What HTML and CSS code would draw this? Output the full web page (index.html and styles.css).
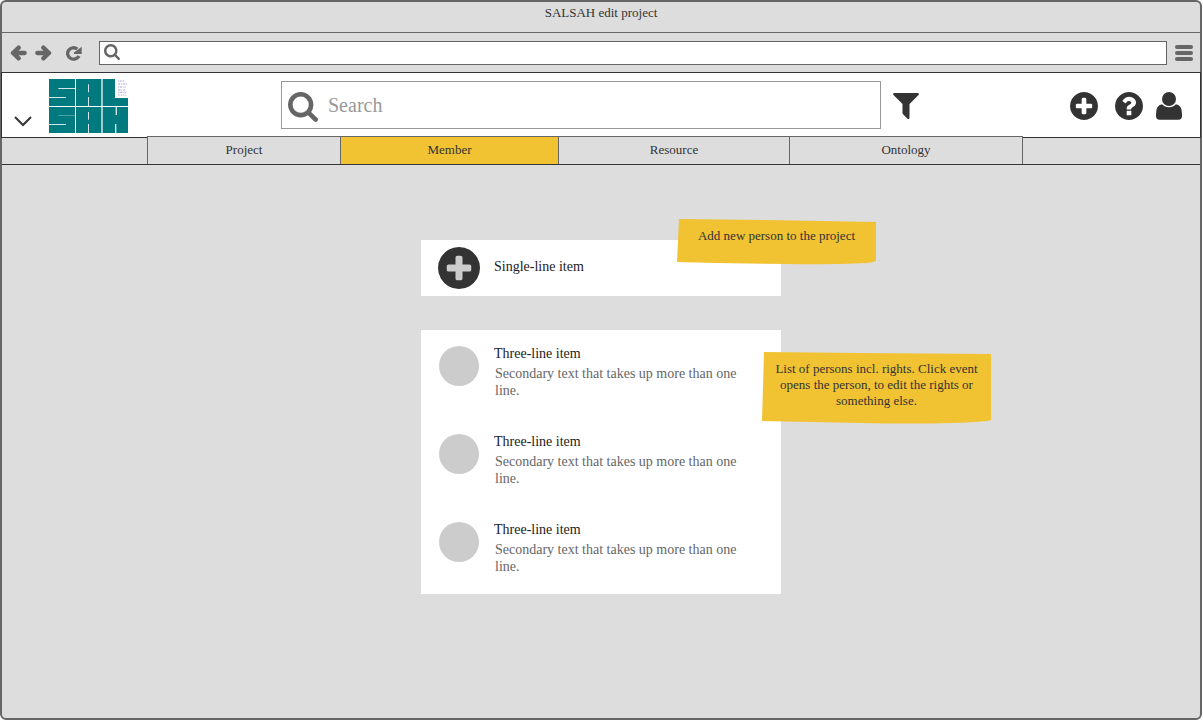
FILE: index.html
```html
<!DOCTYPE html>
<html lang="en">
<head>
<meta charset="utf-8">
<meta name="viewport" content="width=device-width, initial-scale=1">
<title>SALSAH edit project</title>
<link rel="stylesheet" href="styles.css">
</head>
<body>
<svg class="symbols" aria-hidden="true">
  <symbol id="search" viewBox="64 128 1664 1664"><path d="M1216 832q0-185-131.500-316.500t-316.500-131.500-316.500 131.500-131.500 316.500 131.500 316.500 316.500 131.500 316.500-131.500 131.500-316.500zm512 832q0 52-38 90t-90 38q-54 0-90-38l-343-342q-179 124-399 124-143 0-273.500-55.500t-225-150-150-225-55.500-273.500 55.500-273.500 150-225 225-150 273.500-55.500 273.500 55.500 225 150 150 225 55.500 273.500q0 220-124 399l343 343q37 37 37 90z"/></symbol>
  <symbol id="plus" viewBox="128 128 1536 1536"><path d="M1344 960v-128q0-26-19-45t-45-19h-256v-256q0-26-19-45t-45-19h-128q-26 0-45 19t-19 45v256h-256q-26 0-45 19t-19 45v128q0 26 19 45t45 19h256v256q0 26 19 45t45 19h128q26 0 45-19t19-45v-256h256q26 0 45-19t19-45zm320-64q0 209-103 385.500t-279.500 279.500-385.500 103-385.500-103-279.500-279.500-103-385.500 103-385.500 279.500-279.500 385.500-103 385.500 103 279.500 279.500 103 385.500z"/></symbol>
</svg>
<div class="window">
  <div class="titlebar">SALSAH edit project</div>
  <div class="toolbar">
    <button class="tool" aria-label="Back"><svg width="17" height="16" viewBox="0 0 51 48"><path class="thick" d="M26 8 9 24l17 16M9 24h35"/></svg></button>
    <button class="tool" aria-label="Forward"><svg width="17" height="16" viewBox="0 0 51 48"><path class="thick" d="m25 8 17 16-17 16M42 24H7"/></svg></button>
    <button class="tool reload" aria-label="Reload"><svg width="17" height="16" viewBox="0 0 51 48"><path class="ring" d="M42 33A18 17 0 1 1 37 12"/><path d="M50 5v22H27l-1-4z"/></svg></button>
    <label class="address">
      <svg width="16" height="16"><use href="#search"/></svg>
      <input type="text" aria-label="Address">
    </label>
    <button class="tool menu" aria-label="Menu"><svg width="18" height="16"><rect width="18" height="4" rx="2"/><rect y="6" width="18" height="4" rx="2"/><rect y="12" width="18" height="4" rx="2"/></svg></button>
  </div>

  <header class="header">
    <button class="icon expand" aria-label="Show more"><svg width="18" height="11" viewBox="0 0 18 11"><path class="chevron" d="m1 1 8 8 8-8"/></svg></button>
    <a class="logo" href="#" aria-label="SALSAH">
      <svg width="79" height="54" viewBox="0 0 237 162">
        <path fill="#007a7f" d="M0 0h78v81H0zM81 0h75v81H81zM162 0h36v57h39v24h-75zM0 84h78v78H0zM81 84h75v78H81zM162 84h75v78h-75z"/>
        <path fill="#a3cacc" d="M156 0h6v81h-6zM156 84h6v78h-6z"/>
        <path fill="#d3e7e8" d="M28 27h50v3H28zM0 54h51v3H0zM117 16h3v24h-3zM117 54h3v27h-3zM0 135h51v3H0zM117 99h3v23h-3zM117 135h3v27h-3zM201 84h3v24h-3zM198 135h3v27h-3z"/>
        <path fill="#4d9fa2" d="M28 108h50v3H28zM198 84h3v24h-3zM201 135h3v27h-3z"/>
        <g fill="none" stroke="#a9a6d4" stroke-width="3">
          <path stroke-dasharray="3 2 6 3 5 2" d="M207 6h21"/><path stroke-dasharray="6 3 3 2 8 3" d="M207 15h28"/><path stroke-dasharray="4 2 7 3" d="M207 24h24"/><path stroke-dasharray="7 2 3 3" d="M207 33h22"/><path stroke-dasharray="3 2 8 2" d="M207 40h25"/><path stroke-dasharray="5 3 4 2" d="M207 48h24"/>
        </g>
      </svg>
    </a>
    <label class="search">
      <svg width="30" height="30"><use href="#search"/></svg>
      <input type="search" placeholder="Search" aria-label="Search">
    </label>
    <button class="icon" aria-label="Filter"><svg width="26" height="26" viewBox="185 256 1422 1408" preserveAspectRatio="none"><path d="M1595 295q17 41-14 70l-493 493v742q0 42-39 59-13 5-25 5-27 0-45-19l-256-256q-19-19-19-45v-486l-493-493q-31-29-14-70 17-39 59-39h1280q42 0 59 39z"/></svg></button>
    <div class="actions">
      <button class="icon" aria-label="Add"><svg width="28" height="28"><use href="#plus"/></svg></button>
      <button class="icon" aria-label="Help"><svg width="28" height="28" viewBox="128 128 1536 1536"><path d="M1024 1376v-192q0-14-9-23t-23-9h-192q-14 0-23 9t-9 23v192q0 14 9 23t23 9h192q14 0 23-9t9-23zm256-672q0-88-55.500-163t-138.500-116-170-41q-243 0-371 213-15 24 8 42l132 100q7 6 19 6 16 0 25-12 53-68 86-92 34-24 86-24 48 0 85.500 26t37.500 59q0 38-20 61t-68 45q-63 28-115.500 86.500t-52.500 125.500v36q0 14 9 23t23 9h192q14 0 23-9t9-23q0-19 21.500-49.500t54.500-49.500q32-18 49-28.500t46-35 44.500-48 28-60.500 12.500-81zm384 192q0 209-103 385.500t-279.500 279.500-385.500 103-385.500-103-279.500-279.500-103-385.500 103-385.500 279.500-279.500 385.500-103 385.500 103 279.500 279.500 103 385.500z"/></svg></button>
      <button class="icon user" aria-label="Account"><svg width="26" height="28" viewBox="0 0 78 84"><path d="M18 37Q26 46 39 46 52 46 60 37 78 39 78 67V72Q78 83 67 83H11Q0 83 0 72V67Q0 39 18 37z"/><circle cx="39" cy="21" r="21"/></svg></button>
    </div>
  </header>

  <nav class="tabs">
    <span class="filler"></span>
    <a class="tab" href="#">Project</a>
    <a class="tab current" href="#" aria-current="page">Member</a>
    <a class="tab" href="#">Resource</a>
    <a class="tab last" href="#">Ontology</a>
    <span class="filler"></span>
  </nav>

  <main class="content">
    <section class="card">
      <a class="item single" href="#">
        <svg class="add" width="42" height="42"><circle cx="21" cy="21" r="18" fill="#ccc"/><use href="#plus"/></svg>
        <span class="name">Single-line item</span>
      </a>
      <aside class="note note-add">
        <svg viewBox="0 0 200 46" preserveAspectRatio="none"><path d="M3 0 90 1 199 3 199 41Q200 43 190 44 150 46 110 45L40 44 1 43z"/></svg>
        <p>Add new person to the project</p>
      </aside>
    </section>
    <section class="card">
      <ul class="list">
        <li class="item"><span class="avatar"></span><div><h2 class="name">Three-line item</h2><p class="detail">Secondary text that takes up more than one line.</p></div></li>
        <li class="item"><span class="avatar"></span><div><h2 class="name">Three-line item</h2><p class="detail">Secondary text that takes up more than one line.</p></div></li>
        <li class="item"><span class="avatar"></span><div><h2 class="name">Three-line item</h2><p class="detail">Secondary text that takes up more than one line.</p></div></li>
      </ul>
      <aside class="note note-list">
        <svg viewBox="0 0 231 72" preserveAspectRatio="none"><path d="M3 0 100 1 230 2 230 68Q226 70 190 71 150 72 100 71L1 69z"/></svg>
        <p>List of persons incl. rights. Click event opens the person, to edit the rights or something else.</p>
      </aside>
    </section>
  </main>
</div>
</body>
</html>
```
FILE: styles.css
```css
* {
  box-sizing: border-box;
}

body {
  margin: 0;
  padding-right: 1px;
  background: #fff;
  color: #333;
  font: 13px/16px "Liberation Serif", "Times New Roman", serif;
}

a {
  color: inherit;
  text-decoration: none;
}

button {
  display: flex;
  padding: 0;
  border: 0;
  background: none;
}

input {
  flex: 1;
  min-width: 0;
  padding: 0;
  border: 0;
  outline: 0;
  background: none;
  color: #333;
  font: inherit;
}

svg {
  display: block;
  flex: none;
}

h2,
p,
ul {
  margin: 0;
  padding: 0;
}

.symbols {
  position: absolute;
  width: 0;
  height: 0;
}

.window {
  display: flex;
  flex-direction: column;
  min-height: 100vh;
  border: 2px solid #666;
  border-radius: 6px;
  background: #ddd;
}

.titlebar {
  padding: 3px 0 11px;
  border-bottom: 1px solid #666;
  text-align: center;
}

/* Browser toolbar */
.toolbar {
  display: flex;
  align-items: center;
  gap: 8px;
  padding: 8px 7px 7px 8px;
  fill: #666;
}

.thick,
.ring {
  fill: none;
  stroke: #666;
}

.thick {
  stroke-width: 13;
  stroke-linecap: round;
  stroke-linejoin: round;
}

.ring {
  stroke-width: 10;
}

.reload {
  margin-right: 9px;
  margin-left: 5px;
}

.address {
  display: flex;
  flex: 1;
  align-items: center;
  gap: 6px;
  height: 24px;
  padding: 0 4px 2px;
  border: 1px solid #666;
  background: #fff;
}

/* Application header */
.header {
  display: flex;
  align-items: center;
  margin: 0 -1px;
  padding: 6px 18px 4px 12px;
  border: 1px solid #333;
  background: #fff;
  fill: #333;
}

.expand {
  align-self: flex-end;
  margin: 0 17px 6px 0;
}

.chevron {
  fill: none;
  stroke: #333;
  stroke-width: 2;
}

.search {
  display: flex;
  flex: 0 1 600px;
  align-items: center;
  gap: 10px;
  height: 48px;
  margin: 0 12px 2px 153px;
  padding: 0 6px;
  border: 1px solid #999;
  background: #fff;
  font-size: 20px;
  line-height: 24px;
  fill: #666;
}

.search svg {
  margin-top: 4px;
}

.search input::placeholder {
  color: #999;
  opacity: 1;
}

.actions {
  display: flex;
  gap: 17px;
  margin-left: auto;
}

.user {
  margin-left: -4px;
}

/* Tabs */
.tabs {
  display: grid;
  grid-template-columns: 145fr 193fr 218fr 231fr 234fr 177fr;
  align-items: end;
  margin-top: -2px;
  border-bottom: 1px solid #333;
}

.tab {
  padding: 5px 0 6px;
  border: solid #666;
  border-width: 1px 0 0 1px;
  background: #ddd;
  text-align: center;
}

.last {
  border-right-width: 1px;
}

.current {
  background: #f1c232;
}

/* Member list */
.content {
  display: flex;
  flex-direction: column;
  align-items: center;
  gap: 34px;
  padding: 75px 0;
}

.card {
  position: relative;
  width: 100%;
  max-width: 360px;
  background: #fff;
}

.list {
  list-style: none;
}

.item {
  display: flex;
  align-items: flex-start;
  gap: 15px;
  min-height: 88px;
  padding: 16px 32px 16px 18px;
}

.single {
  gap: 14px;
  min-height: 56px;
  padding: 7px 17px;
  align-items: center;
}

.single .name {
  padding-bottom: 2px;
}

.add {
  fill: #333;
}

.avatar {
  flex: none;
  width: 40px;
  height: 40px;
  border-radius: 50%;
  background: #ccc;
}

.name {
  color: #222;
  font-size: 14px;
  font-weight: 400;
  line-height: 16px;
}

.detail {
  padding: 3px 0 0 1px;
  color: #666;
  font-size: 14px;
  line-height: 17px;
}

/* Sticky notes */
.note {
  position: absolute;
  padding: 9px 12px 14px;
  text-align: center;
}

.note svg {
  position: absolute;
  inset: 0;
  width: 100%;
  height: 100%;
  fill: #f1c232;
}

.note p {
  position: relative;
}

.note-add {
  top: -21px;
  left: 255px;
  width: 201px;
  height: 46px;
}

.note-list {
  top: 22px;
  left: 340px;
  width: 231px;
  height: 72px;
}
```
